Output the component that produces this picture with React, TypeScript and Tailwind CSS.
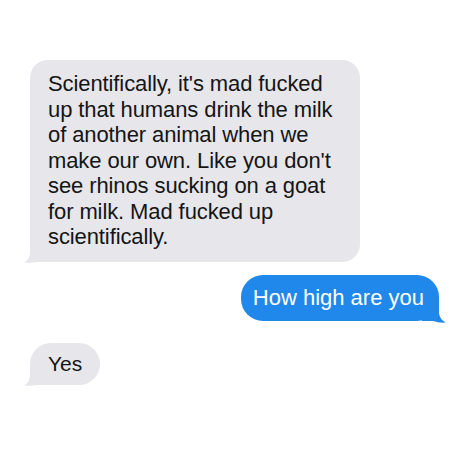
import React from "react";

function LeftTail({ color }: { color: string }) {
  return (
    <svg
      className="absolute left-[-6px] bottom-[-1px]"
      width="24"
      height="23"
      viewBox="0 0 24 23"
    >
      <path
        d="M6 0 H24 V22 H13 C10 22.6 5 23 0 22.6 C3.8 20.5 6 17 6 12 Z"
        fill={color}
      />
    </svg>
  );
}

function RightTail({ color }: { color: string }) {
  return (
    <svg
      className="absolute right-[-7px] bottom-[-2px]"
      width="24"
      height="23"
      viewBox="0 0 24 23"
    >
      <path
        d="M17 0 H0 V21 H11 C14 22 19 23 24 22.6 C20 20.5 17 17 17 12 Z"
        fill={color}
      />
    </svg>
  );
}

export default function App() {
  const lines = [
    "Scientifically, it's mad fucked",
    "up that humans drink the milk",
    "of another animal when we",
    "make our own. Like you don't",
    "see rhinos sucking on a goat",
    "for milk. Mad fucked up",
    "scientifically.",
  ];
  return (
    <div
      className="w-[460px] h-[460px] bg-white overflow-hidden"
      style={{ fontFamily: '"Liberation Sans", Arial, sans-serif' }}
    >
      <div className="flex flex-col pt-[60px]">
        <div className="ml-[30px] w-[330px] relative">
          <div className="relative z-10 bg-[#e6e6eb] rounded-[18px] pl-[18px] pr-3 pt-[11px] pb-[12px] text-[22px] leading-[25.5px] text-[#151515] tracking-[-0.1px]">
            {lines.map((l, i) => (
              <div key={i} className="whitespace-nowrap">
                {l}
              </div>
            ))}
          </div>
          <LeftTail color="#e6e6eb" />
        </div>

        <div className="self-end mr-[21px] mt-[13px] relative">
          <div className="relative z-10 bg-[#1f88ea] rounded-[22px] pl-[12px] pr-[15px] h-[46px] flex items-center text-[22px] leading-[25.5px] text-white whitespace-nowrap">
            How high are you
          </div>
          <RightTail color="#1f88ea" />
        </div>

        <div className="ml-[30px] mt-[22px] relative self-start">
          <div className="relative z-10 bg-[#e6e6eb] rounded-[21px] px-[18px] h-[42px] flex items-center text-[21px] leading-[25px] text-[#151515]">
            Yes
          </div>
          <LeftTail color="#e6e6eb" />
        </div>
      </div>
    </div>
  );
}
